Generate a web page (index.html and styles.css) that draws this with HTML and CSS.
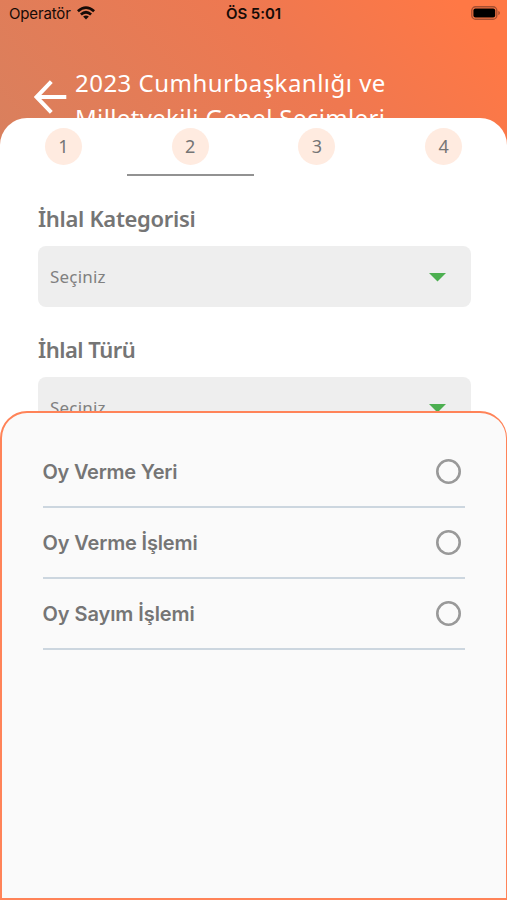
FILE: index.html
```html
<!DOCTYPE html>
<html lang="tr">
<head>
<meta charset="utf-8">
<title>İhlal Bildirimi</title>
<link rel="stylesheet" href="styles.css">
</head>
<body>
<div class="screen">
  <header class="hero">
    <div class="status">
      <div class="carrier"><span class="operator">Operatör</span>
        <svg class="wifi" width="18" height="14" viewBox="0 0 18 14" fill="none" stroke="#160b07" stroke-width="2.7"><path d="M.9 5.2Q9-2.1 17.1 5.2M3.9 8.5Q9 4 14.1 8.5"/><path d="M6.1 10.6Q9 8.2 11.9 10.6L9 13.6Z" fill="#160b07" stroke="none"/></svg>
      </div>
      <span class="clock">ÖS 5:01</span>
      <svg class="battery" width="30" height="14" viewBox="0 0 30 14"><rect x=".8" y=".8" width="25" height="12.4" rx="3.8" fill="none" stroke="#a64e31" stroke-width="1.4"/><rect x="2.4" y="2.5" width="21.8" height="9" rx="2" fill="#000"/><path d="M27.3 4.7Q29 5.5 29 7T27.3 9.3Z" fill="#a64e31"/></svg>
    </div>
    <div class="titlebar">
      <svg class="back" width="34" height="34" viewBox="0 0 34 34" fill="none" stroke="#fff" stroke-width="4"><path d="M32.3 17H3M17.3 1.7L2.5 17L17.3 32.3"/></svg>
      <h1 class="title"><span class="title-first">2023 Cumhurbaşkanlığı ve</span><br><span class="title-second">Milletvekili Genel Seçimleri</span></h1>
    </div>
  </header>
  <main class="card">
    <nav class="steps">
      <div class="step"><span class="num">1</span></div>
      <div class="step active"><span class="num">2</span></div>
      <div class="step"><span class="num">3</span></div>
      <div class="step"><span class="num">4</span></div>
    </nav>
    <div class="form">
      <h2 class="label category">İhlal Kategorisi</h2>
      <div class="select"><span>Seçiniz</span><i class="caret"></i></div>
      <h2 class="label kind">İhlal Türü</h2>
      <div class="select"><span>Seçiniz</span><i class="caret"></i></div>
    </div>
  </main>
  <section class="sheet">
    <div class="option"><span class="place">Oy Verme Yeri</span><i class="radio"></i></div>
    <div class="option"><span class="voting">Oy Verme İşlemi</span><i class="radio"></i></div>
    <div class="option"><span class="counting">Oy Sayım İşlemi</span><i class="radio"></i></div>
  </section>
</div>
</body>
</html>
```
FILE: styles.css
```css
* { box-sizing: border-box; }
body { margin: 0; font-family: "Noto Sans", sans-serif; color: #757575; }
.screen { position: relative; width: 507px; height: 900px; overflow: hidden; background: #fff; }
.hero { height: 160px; background: linear-gradient(50deg, #d8805e 0%, #ef7850 60%, #ff7845 92%); }
.status { display: grid; grid-template-columns: 1fr auto 1fr; height: 26px; align-items: center; padding: 0 6px 0 9px; color: #160b07; font-family: Inter, sans-serif; font-size: 15px; }
.carrier { display: flex; align-items: center; gap: 6px; }
.operator { letter-spacing: -.15px; }
.clock { font-weight: 600; font-size: 15px; letter-spacing: -.05px; margin-right: 3px; }
.battery { justify-self: end; }
.titlebar { display: flex; padding: 39px 0 0 34px; }
.back { margin-top: 15px; flex: none; }
.title { margin: 0 0 0 7px; font-size: 24px; line-height: 35px; font-weight: 400; color: #fff; white-space: nowrap; }
.title-first { letter-spacing: .48px; }
.title-second { letter-spacing: .35px; }
.card { position: relative; margin-top: -42px; height: 782px; border-radius: 27px 27px 0 0; background: #fff; }
.steps { display: grid; grid-template-columns: repeat(4, 1fr); height: 58px; }
.step { display: flex; justify-content: center; padding-top: 10px; }
.active { border-bottom: 2px solid #929292; }
.num { width: 37px; height: 37px; border-radius: 50%; background: #ffebe0; text-align: center; font: 18px/37px "Noto Sans", sans-serif; }
.form { padding: 24px 36.5px 0 38px; }
.label { margin: 0; font-size: 22px; line-height: 36px; font-weight: 600; }
.category { letter-spacing: -.3px; }
.kind { letter-spacing: -.5px; }
.select { display: flex; align-items: center; justify-content: space-between; height: 61px; margin: 10px 0 24px; padding: 0 24px 0 12px; border-radius: 8px; background: #eee; font-size: 17px; letter-spacing: .2px; color: #808080; }
.caret { width: 18px; height: 9px; margin-top: 1px; background: #4caf50; clip-path: polygon(0 0, 100% 0, 50% 100%); }
.sheet { position: absolute; left: 0; right: 0; top: 411px; height: 489px; border: 2px solid #ff8358; border-right-width: 1.5px; border-radius: 27px 27px 0 0; background: #fafafa; padding: 24px 41px 0 40.5px; }
.option { display: flex; align-items: center; justify-content: space-between; height: 71px; padding-right: 4px; border-bottom: 2px solid #ccd6df; font: 600 20px Inter, sans-serif; }
.place { letter-spacing: -.25px; }
.voting { letter-spacing: -.15px; }
.counting { letter-spacing: -.07px; }
.radio { width: 25px; height: 25px; border-radius: 50%; box-shadow: inset 0 0 0 2.6px #999; }
```
